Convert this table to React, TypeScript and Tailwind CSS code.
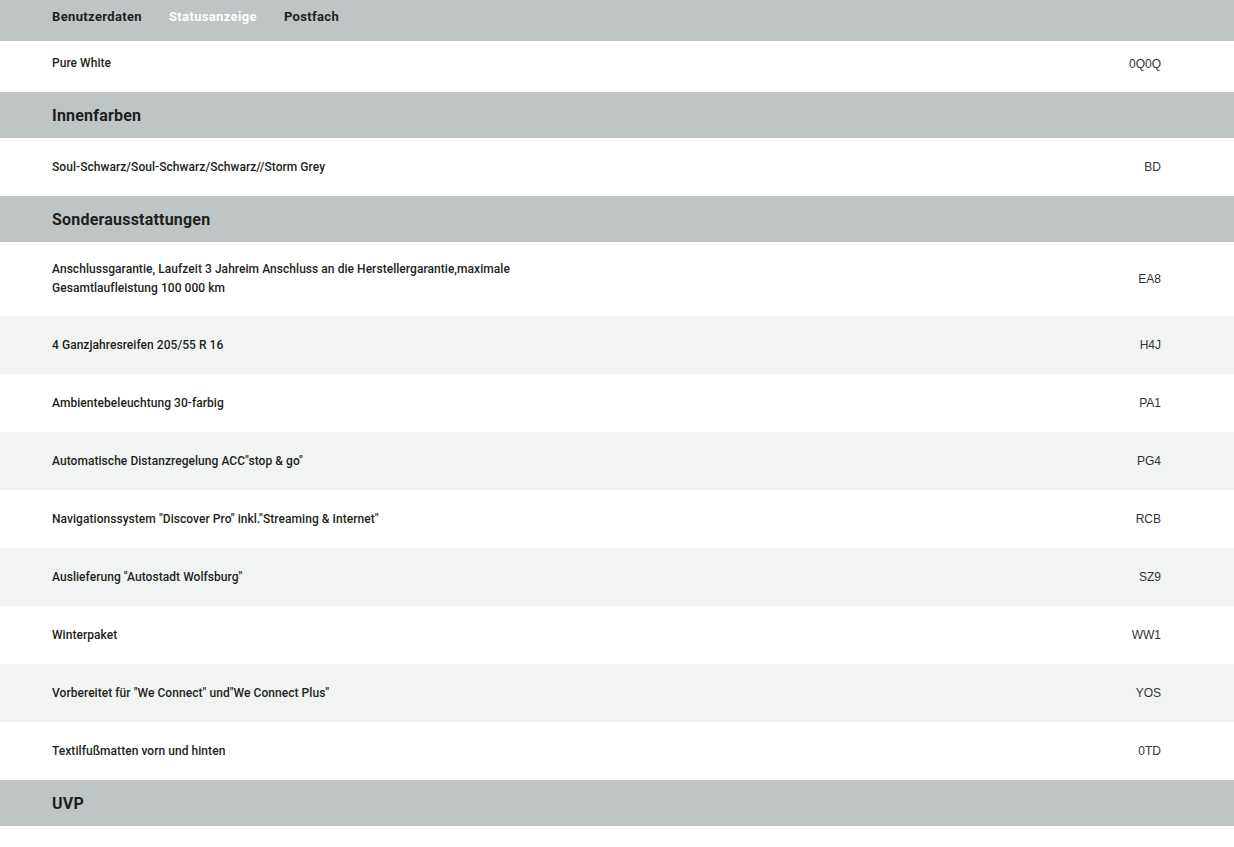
import React from 'react';

interface Item {
  label: React.ReactNode;
  code: string;
}

const sans = "font-['Roboto','Liberation_Sans',sans-serif]";

const navItems = [
  { label: 'Benutzerdaten', active: false },
  { label: 'Statusanzeige', active: true },
  { label: 'Postfach', active: false },
];

const extras: Item[] = [
  {
    label: (
      <>
        Anschlussgarantie, Laufzeit 3 Jahreim Anschluss an die Herstellergarantie,maximale
        <br />
        Gesamtlaufleistung 100 000 km
      </>
    ),
    code: 'EA8',
  },
  { label: '4 Ganzjahresreifen 205/55 R 16', code: 'H4J' },
  { label: 'Ambientebeleuchtung 30-farbig', code: 'PA1' },
  { label: 'Automatische Distanzregelung ACC"stop & go"', code: 'PG4' },
  { label: 'Navigationssystem "Discover Pro" inkl."Streaming & Internet"', code: 'RCB' },
  { label: 'Auslieferung "Autostadt Wolfsburg"', code: 'SZ9' },
  { label: 'Winterpaket', code: 'WW1' },
  { label: 'Vorbereitet für "We Connect" und"We Connect Plus"', code: 'YOS' },
  { label: 'Textilfußmatten vorn und hinten', code: '0TD' },
];

const SectionHeader: React.FC<{ title: string }> = ({ title }) => (
  <div className="h-[46px] flex items-center bg-[#bfc4c4] pl-[52px] pt-[1px]">
    <h2 className={`${sans} text-[16px] font-bold text-[#1d1f20] tracking-[0.2px]`}>{title}</h2>
  </div>
);

const Row: React.FC<{ item: Item; shaded?: boolean; className?: string }> = ({ item, shaded, className }) => (
  <div
    className={`flex items-center justify-between min-h-[58px] py-[18px] pl-[52px] pr-[73px] ${
      shaded ? 'bg-[#f2f4f3]' : 'bg-white'
    } ${className ?? ''}`}
  >
    <span className={`${sans} text-[12px] leading-[19px] font-medium text-[#1d1f20] tracking-[0.05px]`}>
      {item.label}
    </span>
    <span className="font-['Liberation_Sans',Arial,sans-serif] text-[12px] text-[#333]">{item.code}</span>
  </div>
);

export default function App() {
  return (
    <div className="min-h-[847px] bg-white">
      <nav className="h-[41px] bg-[#bfc4c4] flex items-center gap-[27px] pl-[52px] pb-[7px]">
        {navItems.map((n) => (
          <span
            key={n.label}
            className={`${sans} text-[13px] font-bold tracking-[0.35px] ${
              n.active ? 'text-white' : 'text-[#1d1f20]'
            }`}
          >
            {n.label}
          </span>
        ))}
      </nav>

      <Row
        item={{ label: 'Pure White', code: '0Q0Q' }}
        className="!min-h-[51px] !pt-[13px] !pb-[19px]"
      />

      <SectionHeader title="Innenfarben" />
      <Row item={{ label: 'Soul-Schwarz/Soul-Schwarz/Schwarz//Storm Grey', code: 'BD' }} />

      <SectionHeader title="Sonderausstattungen" />
      {extras.map((item, i) => (
        <Row key={item.code} item={item} shaded={i % 2 === 1} />
      ))}

      <SectionHeader title="UVP" />
    </div>
  );
}
